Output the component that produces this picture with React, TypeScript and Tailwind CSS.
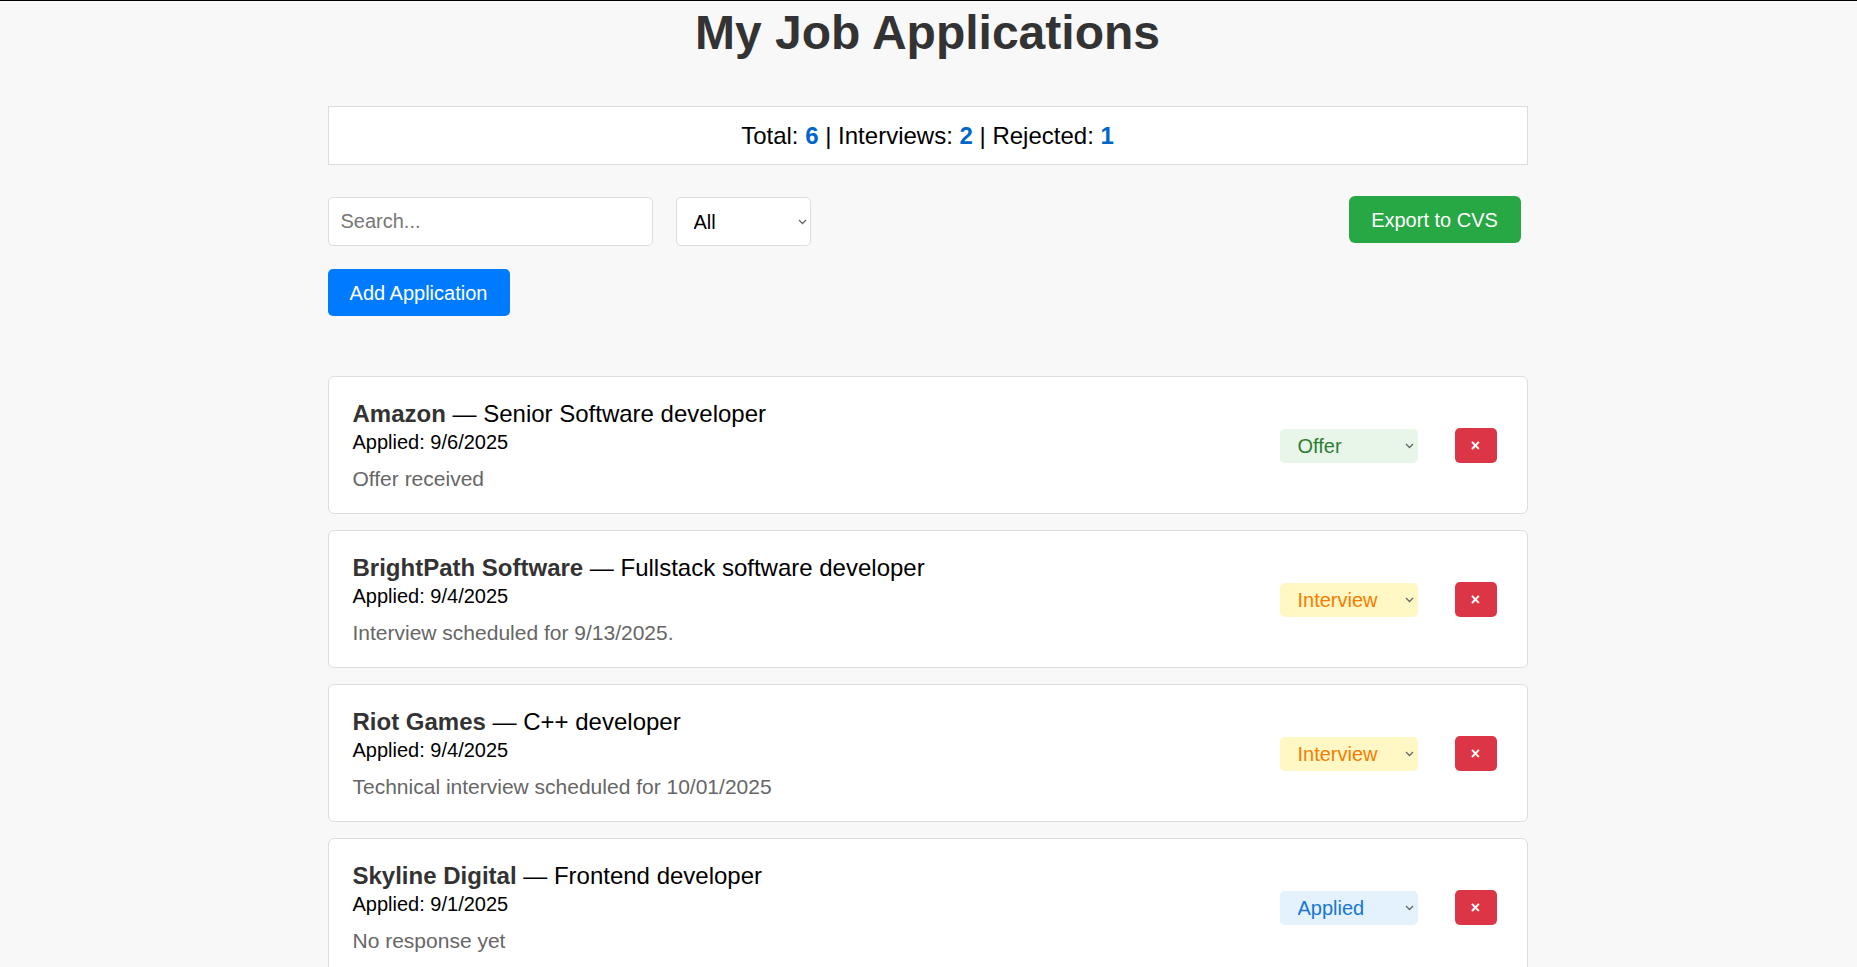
import { useState } from 'react'

type Status = 'Applied' | 'Interview' | 'Offer' | 'Rejected'

interface Application {
  id: number
  company: string
  role: string
  applied: string
  notes: string
  status: Status
}

const initialApps: Application[] = [
  { id: 1, company: 'Amazon', role: 'Senior Software developer', applied: '9/6/2025', notes: 'Offer received', status: 'Offer' },
  { id: 2, company: 'BrightPath Software', role: 'Fullstack software developer', applied: '9/4/2025', notes: 'Interview scheduled for 9/13/2025.', status: 'Interview' },
  { id: 3, company: 'Riot Games', role: 'C++ developer', applied: '9/4/2025', notes: 'Technical interview scheduled for 10/01/2025', status: 'Interview' },
  { id: 4, company: 'Skyline Digital', role: 'Frontend developer', applied: '9/1/2025', notes: 'No response yet', status: 'Applied' },
  { id: 5, company: 'Northwind Labs', role: 'Backend developer', applied: '8/28/2025', notes: 'Rejected after first round', status: 'Rejected' },
  { id: 6, company: 'Bluewave Tech', role: 'Junior web developer', applied: '8/25/2025', notes: 'Waiting for reply', status: 'Applied' },
]

const statusStyles: Record<Status, string> = {
  Applied: 'bg-[#e3f2fd] text-[#1976d2]',
  Interview: 'bg-[#fff8c5] text-[#f57c00]',
  Offer: 'bg-[#e8f5e9] text-[#2e7d32]',
  Rejected: 'bg-[#ffebee] text-[#c62828]',
}

function Chevron() {
  return (
    <svg
      className="pointer-events-none absolute right-[4px] top-1/2 -translate-y-1/2"
      width="9"
      height="6"
      viewBox="0 0 9 6"
      fill="none"
    >
      <path d="M1 1l3.5 3.5L8 1" stroke="#666" strokeWidth="1.3" />
    </svg>
  )
}

export default function App() {
  const [apps, setApps] = useState<Application[]>(initialApps)
  const [search, setSearch] = useState('')
  const [filter, setFilter] = useState('All')

  const interviews = apps.filter((a) => a.status === 'Interview').length
  const rejected = apps.filter((a) => a.status === 'Rejected').length

  const visible = apps.filter(
    (a) =>
      (filter === 'All' || a.status === filter) &&
      (a.company + ' ' + a.role).toLowerCase().includes(search.toLowerCase())
  )

  const updateStatus = (id: number, status: Status) => {
    setApps(apps.map((a) => (a.id === id ? { ...a, status } : a)))
  }

  const removeApp = (id: number) => {
    setApps(apps.filter((a) => a.id !== id))
  }

  return (
    <div className="min-h-screen bg-[#f8f8f8] border-t border-black font-['Liberation_Sans',Arial,sans-serif] pb-10">
      <div className="max-w-[1200px] mx-auto pt-[4px] relative right-[1px]">
        <h1 className="text-center text-[48px] leading-[55px] font-bold text-[#333]">My Job Applications</h1>

        <div className="mt-[46px] bg-white border border-[#ddd] py-[15px] text-center text-[24px] leading-[27px] text-black">
          Total: <span className="font-bold text-[#0066cc]">{apps.length}</span> | Interviews:{' '}
          <span className="font-bold text-[#0066cc]">{interviews}</span> | Rejected:{' '}
          <span className="font-bold text-[#0066cc]">{rejected}</span>
        </div>

        <div className="mt-[31px] flex items-start justify-between">
          <div className="flex gap-[23px] pt-[1px]">
            <input
              type="text"
              placeholder="Search..."
              value={search}
              onChange={(e) => setSearch(e.target.value)}
              className="w-[325px] h-[49px] bg-white border border-[#ddd] rounded-[5px] px-[12px] text-[20px] text-black placeholder:text-[#777] outline-none"
            />
            <div className="relative">
              <select
                value={filter}
                onChange={(e) => setFilter(e.target.value)}
                className="appearance-none w-[135px] h-[49px] bg-white border border-[#ddd] rounded-[5px] pl-[17px] text-[20px] text-black outline-none"
              >
                <option>All</option>
                <option>Applied</option>
                <option>Interview</option>
                <option>Offer</option>
                <option>Rejected</option>
              </select>
              <Chevron />
            </div>
          </div>
          <button className="mr-[7px] w-[172px] h-[47px] bg-[#28a745] text-white text-[20px] rounded-[6px]">
            Export to CVS
          </button>
        </div>

        <button className="mt-[23px] w-[182px] h-[47px] bg-[#007bff] text-white text-[20px] rounded-[5px]">
          Add Application
        </button>

        <div className="mt-[60px] flex flex-col gap-[16px]">
          {visible.map((app) => (
            <div
              key={app.id}
              className="bg-white border border-[#ddd] rounded-[6px] pl-[24px] pr-[30px] pt-[23px] pb-[22px] flex items-center justify-between"
            >
              <div>
                <div className="text-[24px] leading-[27px] text-black">
                  <span className="font-bold text-[#333]">{app.company}</span> — {app.role}
                </div>
                <div className="mt-[4px] text-[20px] leading-[23px] text-black">Applied: {app.applied}</div>
                <div className="mt-[13px] text-[21px] leading-[24px] text-[#666]">{app.notes}</div>
              </div>
              <div className="flex items-center gap-[37px]">
                <div className="relative">
                  <select
                    value={app.status}
                    onChange={(e) => updateStatus(app.id, e.target.value as Status)}
                    className={`appearance-none w-[138px] h-[34px] rounded-[5px] pl-[18px] text-[20px] outline-none ${statusStyles[app.status]}`}
                  >
                    <option>Applied</option>
                    <option>Interview</option>
                    <option>Offer</option>
                    <option>Rejected</option>
                  </select>
                  <Chevron />
                </div>
                <button
                  onClick={() => removeApp(app.id)}
                  className="w-[42px] h-[35px] bg-[#dc3545] text-white text-[16px] font-bold rounded-[5px] leading-none"
                >
                  ×
                </button>
              </div>
            </div>
          ))}
        </div>
      </div>
    </div>
  )
}
